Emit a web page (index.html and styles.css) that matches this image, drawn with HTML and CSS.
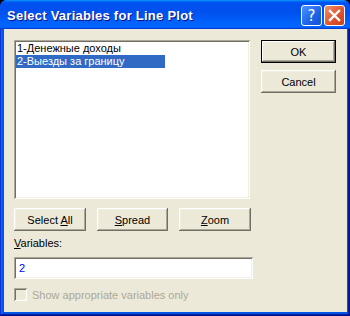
FILE: index.html
```html
<!DOCTYPE html>
<html lang="en">
<head>
    <meta charset="UTF-8">
    <title>Select Variables for Line Plot</title>
    <link rel="stylesheet" href="styles.css">
</head>
<body>
    <div class="window">
        <div class="titlebar">
            <span class="title">Select Variables for Line Plot</span>
            <div class="tb-buttons">
                <div class="tb-btn help">?</div>
                <div class="tb-btn close">
                    <svg width="13" height="13" viewBox="0 0 13 13">
                        <path d="M2 2 L11 11 M11 2 L2 11" stroke="#fff" stroke-width="2.4" stroke-linecap="square"/>
                    </svg>
                </div>
            </div>
        </div>
        <div class="client">
            <div class="top">
                <div class="listbox">
                    <div class="item">1-Денежные доходы</div>
                    <div class="item selected">2-Выезды за границу</div>
                </div>
                <div class="side">
                    <button class="btn default">OK</button>
                    <button class="btn">Cancel</button>
                </div>
            </div>
            <div class="btnrow">
                <button class="btn">Select <u>A</u>ll</button>
                <button class="btn narrow"><u>S</u>pread</button>
                <button class="btn"><u>Z</u>oom</button>
            </div>
            <div class="label"><u>V</u>ariables:</div>
            <div class="field">2</div>
            <div class="check">
                <span class="box"></span>
                <span>Show appropriate variables only</span>
            </div>
        </div>
    </div>
</body>
</html>
```

FILE: styles.css
```css
html, body {
    margin: 0;
    background: #000;
}
.window {
    width: 350px;
    height: 316px;
    display: flex;
    flex-direction: column;
    background: #0055e5;
    border-radius: 7px 7px 0 0;
    box-shadow: inset -1px -1px #00138c, inset 1px 1px #0831d9, inset -2px -2px #001ea0, inset 2px 2px #166aee;
    font-family: "Liberation Sans", Arial, sans-serif;
    font-size: 11px;
}
.titlebar {
    height: 29px;
    display: flex;
    align-items: center;
    padding: 0 5px 0 7px;
    border-radius: 7px 7px 0 0;
    background: linear-gradient(180deg, #0997ff, #0053ee 8%, #0050ee 40%, #06f 88%, #06f 93%, #005bff 95%, #003dd7 96%, #003dd7);
}
.title {
    flex: 1;
    color: #fff;
    font-weight: bold;
    font-size: 13px;
    letter-spacing: 0.25px;
    text-shadow: 1px 1px #0f1089;
    margin-top: 1px;
}
.tb-buttons {
    display: flex;
    gap: 2px;
    margin-top: 2px;
}
.tb-btn {
    width: 19px;
    height: 19px;
    border: 1px solid #fff;
    border-radius: 3px;
    display: flex;
    align-items: center;
    justify-content: center;
    color: #fff;
}
.help {
    background: linear-gradient(135deg, #4d94ff, #1c62e6 60%, #1553d4);
    font: 15px "DejaVu Sans", sans-serif;
}
.close {
    background: linear-gradient(135deg, #f0936f, #e0542f 55%, #c8401c);
}
.client {
    flex: 1;
    margin: 0 3px 4px 4px;
    background: #ece9d8;
    padding: 11px 11px 0 10px;
}
.top {
    display: flex;
    gap: 11px;
}
.listbox {
    width: 232px;
    height: 155px;
    padding: 2px;
    background: #fff;
    box-shadow: inset 1px 1px #aca899, inset -1px -1px #fff, inset 2px 2px #716f64, inset -2px -2px #f1efe2;
}
.item {
    width: 148px;
    height: 13px;
    line-height: 13px;
    padding-left: 1px;
    color: #000;
}
.item.selected {
    background: #316ac5;
    color: #fff;
}
.side {
    display: flex;
    flex-direction: column;
    gap: 7px;
}
.btn {
    width: 75px;
    height: 23px;
    padding: 0;
    border: none;
    background: #ece9d8;
    font: 11px "Liberation Sans", Arial, sans-serif;
    color: #000;
    box-shadow: inset -1px -1px #716f64, inset 1px 1px #fff, inset -2px -2px #aca899, inset 2px 2px #f1efe2;
}
.btn.default {
    box-shadow: inset 0 0 0 1px #000, inset -2px -2px #716f64, inset 2px 2px #fff, inset -3px -3px #aca899;
}
.btnrow {
    display: flex;
    gap: 11px;
    margin-top: 9px;
}
.btnrow .btn {
    width: 72px;
}
.btnrow .btn.narrow {
    width: 71px;
}
.label {
    margin-top: 6px;
    line-height: 13px;
    height: 13px;
}
.field {
    width: 234px;
    height: 18px;
    margin-top: 7px;
    padding: 2px 0 2px 5px;
    line-height: 18px;
    color: #0000ff;
    background: #fff;
    box-shadow: inset 1px 1px #aca899, inset -1px -1px #fff, inset 2px 2px #716f64, inset -2px -2px #f1efe2;
}
.check {
    display: flex;
    align-items: center;
    gap: 5px;
    margin-top: 9px;
    color: #aca899;
}
.box {
    width: 13px;
    height: 13px;
    background: #ece9d8;
    box-shadow: inset 1px 1px #aca899, inset -1px -1px #fff, inset 2px 2px #716f64, inset -2px -2px #f1efe2;
}
```
